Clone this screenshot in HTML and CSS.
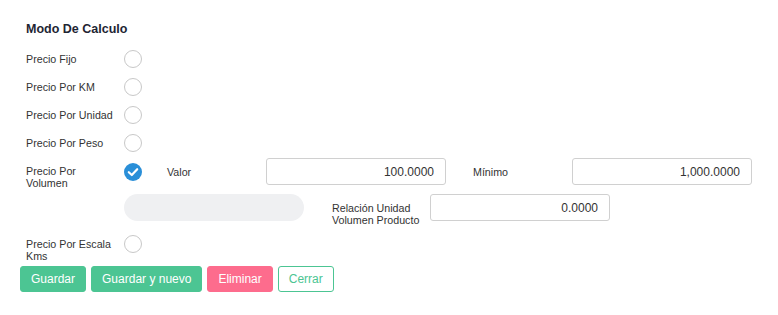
FILE: index.html
```html
<!DOCTYPE html>
<html lang="es">
<head>
    <meta charset="UTF-8">
    <title>Modo De Calculo</title>
    <link rel="stylesheet" href="styles.css">
</head>
<body>
    <div class="panel">
        <div class="form">
            <h2 class="title">Modo De Calculo</h2>

            <div class="row">
                <label class="row-label">Precio Fijo</label>
                <span class="radio"></span>
            </div>
            <div class="row">
                <label class="row-label">Precio Por KM</label>
                <span class="radio"></span>
            </div>
            <div class="row">
                <label class="row-label">Precio Por Unidad</label>
                <span class="radio"></span>
            </div>
            <div class="row">
                <label class="row-label">Precio Por Peso</label>
                <span class="radio"></span>
            </div>

            <div class="row row-volume">
                <label class="row-label">Precio Por Volumen</label>
                <span class="radio checked">
                    <svg width="18" height="18" viewBox="0 0 18 18"><path d="M4.8 9.2 L7.8 12 L13.2 6.2" fill="none" stroke="#fff" stroke-width="2.2" stroke-linecap="round" stroke-linejoin="round"/></svg>
                </span>
                <span class="field-label first">Valor</span>
                <input class="field" type="text" value="100.0000">
                <span class="field-label second">Mínimo</span>
                <input class="field" type="text" value="1,000.0000">
            </div>
            <div class="row row-extra">
                <span class="pill"></span>
                <span class="field-label relation">Relación Unidad Volumen Producto</span>
                <input class="field" type="text" value="0.0000">
            </div>

            <div class="row row-scale">
                <label class="row-label">Precio Por Escala Kms</label>
                <span class="radio"></span>
            </div>
        </div>

        <div class="actions">
            <button class="btn btn-green">Guardar</button>
            <button class="btn btn-green">Guardar y nuevo</button>
            <button class="btn btn-red">Eliminar</button>
            <button class="btn btn-outline">Cerrar</button>
        </div>
    </div>
</body>
</html>
```

FILE: styles.css
```css
body {
    margin: 0;
    background: #fff;
    font-family: 'Liberation Sans', Arial, sans-serif;
    color: #333;
}

.panel {
    padding: 20px 20px 0 20px;
}

.form {
    padding-left: 6px;
}

.title {
    margin: 1px 0 12px 0;
    font-size: 12.5px;
    font-weight: bold;
    color: #1e2533;
    line-height: 17px;
}

.row {
    display: flex;
    align-items: center;
    margin-bottom: 10px;
}

.row-label {
    width: 90px;
    padding-right: 8px;
    flex-shrink: 0;
    font-size: 10.7px;
    line-height: 12px;
    color: #333;
}

.radio {
    width: 16px;
    height: 16px;
    border: 1px solid #c8c8c8;
    border-radius: 50%;
    flex-shrink: 0;
    background: #fff;
}

.radio.checked {
    width: 18px;
    height: 18px;
    border: none;
    background: #2a8fd8;
}

.radio svg {
    display: block;
}

.row-volume {
    height: 27px;
    margin-top: -4px;
    margin-bottom: 9px;
}

.row-volume .row-label {
    align-self: flex-start;
    padding-top: 7px;
}

.field-label {
    font-size: 10.7px;
    line-height: 12px;
    color: #333;
    flex-shrink: 0;
}

.field-label.first {
    margin-left: 25px;
    width: 99px;
}

.field-label.second {
    margin-left: 27px;
    width: 99px;
}

.field-label.relation {
    margin-left: 28px;
    width: 98px;
    align-self: flex-start;
    padding-top: 8px;
}

.field {
    box-sizing: border-box;
    width: 180px;
    height: 27px;
    border: 1px solid #d0d0d0;
    border-radius: 3px;
    padding: 0 11px;
    text-align: right;
    font-family: 'Liberation Sans', Arial, sans-serif;
    font-size: 12px;
    color: #333;
    flex-shrink: 0;
}

.row-extra {
    height: 27px;
    padding-left: 98px;
    margin-bottom: 14px;
}

.pill {
    width: 180px;
    height: 27px;
    border-radius: 14px;
    background: #eff0f2;
    flex-shrink: 0;
}

.row-scale {
    align-items: flex-start;
    margin-bottom: 4px;
}

.row-scale .row-label {
    padding-top: 3px;
}

.actions {
    display: flex;
    gap: 5px;
}

.btn {
    height: 26px;
    padding: 0 10px;
    border-radius: 3px;
    border: 1px solid transparent;
    font-family: 'Liberation Sans', Arial, sans-serif;
    font-size: 12px;
    color: #fff;
    cursor: pointer;
}

.btn-green {
    background: #4cc593;
    border-color: #4cc593;
}

.btn-red {
    background: #fd6c8d;
    border-color: #fd6c8d;
}

.btn-outline {
    background: #fff;
    border-color: #4cc593;
    color: #4cc593;
}
```
